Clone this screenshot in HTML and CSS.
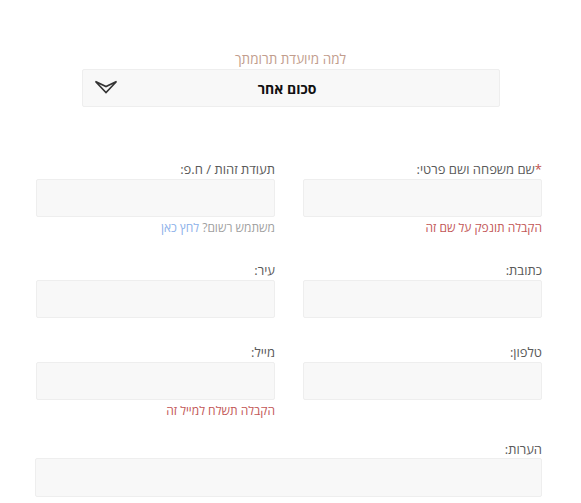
FILE: index.html
```html
<!DOCTYPE html>
<html lang="he" dir="rtl">
<head>
<meta charset="utf-8">
<title>טופס תרומה</title>
<link rel="stylesheet" href="styles.css">
</head>
<body>
<main class="page">
  <section class="purpose">
    <div class="purpose-label">למה מיועדת תרומתך</div>
    <div class="select">
      <span class="select-spacer"></span>
      <span class="select-value">סכום אחר</span>
      <svg class="chevron" width="24" height="14" viewBox="0 0 24 14" aria-hidden="true">
        <path d="M1.5 1.5 L12 6.5 L22.5 1.5 L12 12.5 Z" fill="none" stroke="#333" stroke-width="1.6" stroke-linejoin="miter"/>
      </svg>
    </div>
  </section>

  <section class="form">
    <div class="row row-1">
      <div class="field">
        <label class="label"><span class="req">*</span>שם משפחה ושם פרטי:</label>
        <div class="input"></div>
        <div class="help help-red">הקבלה תונפק על שם זה</div>
      </div>
      <div class="field">
        <label class="label">תעודת זהות / ח.פ:</label>
        <div class="input"></div>
        <div class="help help-gray">משתמש רשום? <a class="link" href="#">לחץ כאן</a></div>
      </div>
    </div>

    <div class="row row-2">
      <div class="field">
        <label class="label">כתובת:</label>
        <div class="input"></div>
      </div>
      <div class="field">
        <label class="label">עיר:</label>
        <div class="input"></div>
      </div>
    </div>

    <div class="row row-3">
      <div class="field">
        <label class="label">טלפון:</label>
        <div class="input"></div>
      </div>
      <div class="field">
        <label class="label">מייל:</label>
        <div class="input"></div>
        <div class="help help-red">הקבלה תשלח למייל זה</div>
      </div>
    </div>

    <div class="notes">
      <label class="label notes-label">הערות:</label>
      <div class="input notes-input"></div>
    </div>
  </section>
</main>
</body>
</html>
```

FILE: styles.css
```css
html, body {
  margin: 0;
  padding: 0;
  background: #ffffff;
}

body {
  font-family: "Open Sans", "DejaVu Sans", sans-serif;
  direction: rtl;
}

.page {
  padding: 50px 39px 0 35px;
}

.purpose {
  display: flex;
  flex-direction: column;
  align-items: center;
  margin: 0 -39px 0 -35px;
}

.purpose-label {
  font-size: 13.5px;
  line-height: 18px;
  color: #c29d8d;
  margin-bottom: 1px;
}

.select {
  width: 418px;
  height: 38px;
  box-sizing: border-box;
  background: #f8f8f8;
  border: 1px solid #eeeeee;
  border-radius: 2px;
  display: grid;
  grid-template-columns: 1fr auto 1fr;
  align-items: center;
  padding: 0 18px 0 11px;
}

.select-value {
  font-size: 14px;
  font-weight: 700;
  color: #111111;
}

.chevron {
  justify-self: end;
  display: block;
  margin-top: -2px;
}

.form {
  margin-top: 53px;
}

.row {
  display: grid;
  grid-template-columns: 1fr 1fr;
  column-gap: 28px;
  padding-left: 1px;
}

.row-1 { margin-bottom: 24px; }
.row-2 { margin-bottom: 25px; }
.row-3 { margin-bottom: 20px; }

.field {
  display: flex;
  flex-direction: column;
}

.label {
  display: block;
  font-size: 13px;
  line-height: 19px;
  color: #5a5a5a;
}

.req {
  color: #c0504d;
}

.input {
  height: 38px;
  box-sizing: border-box;
  background: #f8f8f8;
  border: 1px solid #eeeeee;
  border-radius: 2px;
}

.help {
  font-size: 12px;
  line-height: 18px;
  margin-top: 2px;
}

.help-red {
  color: #c25656;
}

.help-gray {
  color: #a0a0a0;
}

.link {
  color: #8db1ea;
  text-decoration: none;
}

.notes-label {
  line-height: 18px;
}

.notes-input {
  height: 39px;
}
```
